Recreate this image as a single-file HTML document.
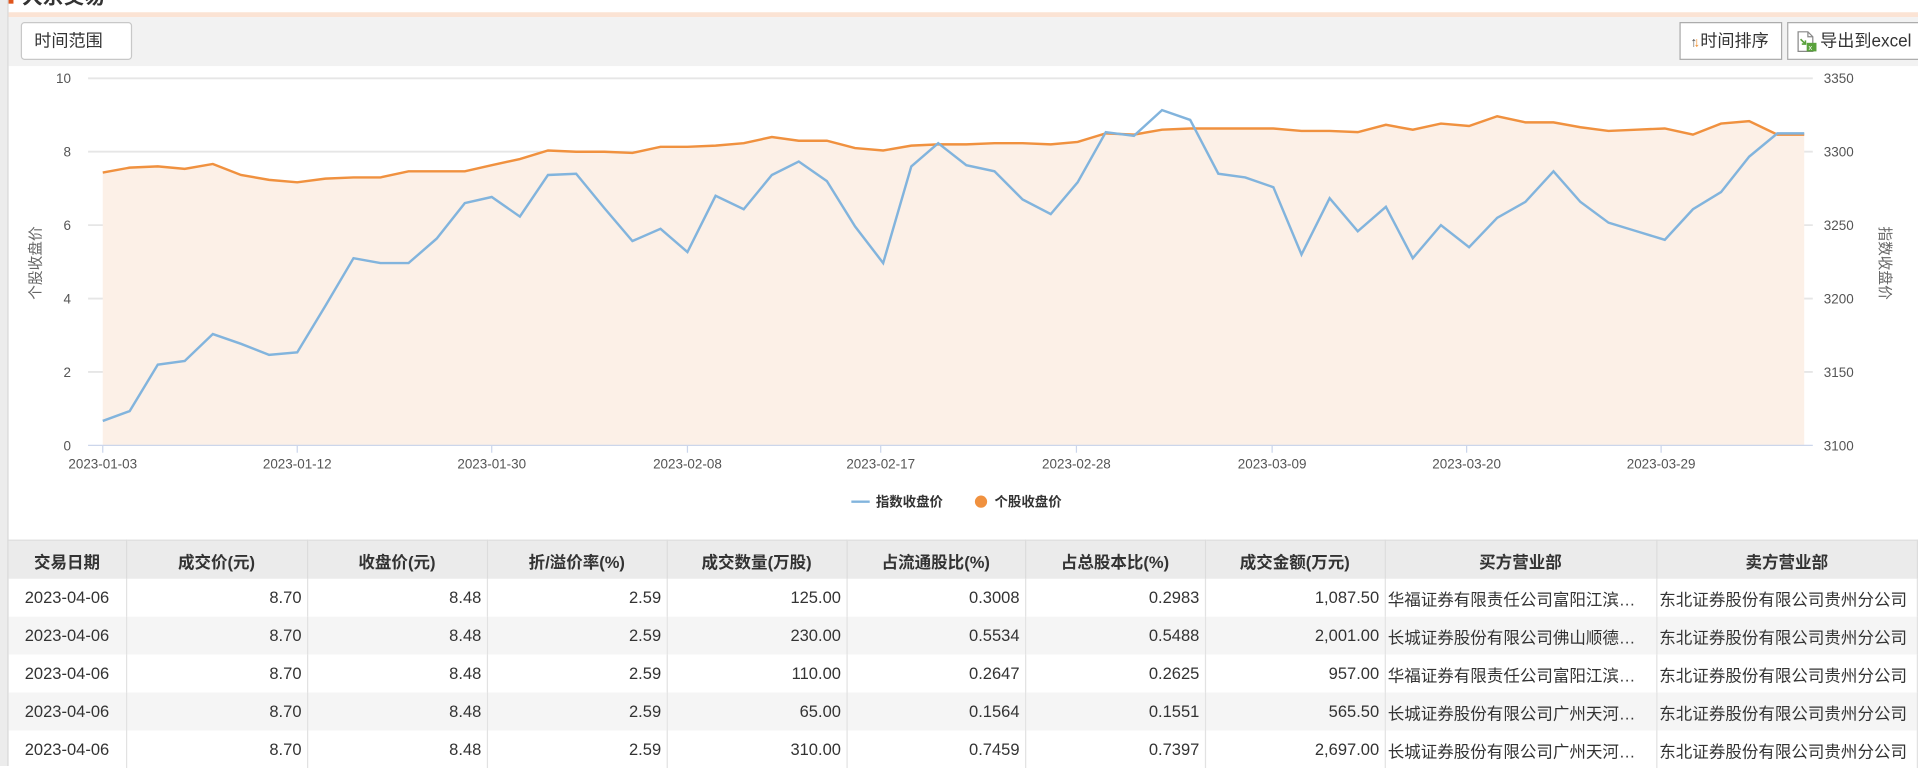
<!DOCTYPE html>
<html><head><meta charset="utf-8"><style>
html,body{margin:0;padding:0;width:1918px;height:766px;overflow:hidden;background:#fff}
#w{position:absolute;left:0;top:0;width:1568px;height:626px;transform:scale(1.22321,1.2236);transform-origin:0 0;font-family:"Liberation Sans","Noto Sans CJK SC",sans-serif;color:#333}
.strip{position:absolute;left:0;top:0;width:6px;height:626px;background:#ececec;border-right:1px solid #d8d8d8}
.mark{position:absolute;left:7px;top:0;width:4px;height:3px;background:#e0561d}
.title{position:absolute;left:18px;top:-17px;font-size:17px;font-weight:bold;color:#333}
.peach{position:absolute;left:7px;right:0;top:10px;height:4px;background:#fbe3d4}
.bar{position:absolute;left:7px;right:0;top:14px;height:40px;background:#f2f2f2}
.btn{position:absolute;top:18px;height:31px;background:#fff;border:1px solid #c8c8c8;box-sizing:border-box;font-size:14px;line-height:29px;color:#333}
table{position:absolute;left:7px;top:441px;border-collapse:collapse;width:1561px;font-size:13.5px}
th{background:#ebebeb;height:31px;font-weight:bold;border-right:1px solid #dcdcdc;border-top:1px solid #dcdcdc;padding:0}
td{height:31px;text-align:right;padding:0 4px;border-right:1px solid #e2e2e2;white-space:nowrap;overflow:hidden}
td:first-child{text-align:center}
td.l{text-align:left;padding-left:2px}
tr.g td{background:#f5f5f5}
</style></head><body><div id="w">
<div class="title">大宗交易</div>
<div class="strip"></div><div class="mark"></div><div class="peach"></div><div class="bar"></div>
<div class="btn" style="left:17px;width:91px;border-radius:3px;padding-left:10px">时间范围</div>
<div class="btn" style="left:1373px;width:84px;padding-left:8px;border-color:#aaa"><span style="font-size:11px;color:#555">↑</span><span style="font-size:11px;color:#f08a24;margin-left:-3px">↓</span>时间排序</div>
<div class="btn" style="left:1461px;width:110px;padding-left:26px;border-color:#aaa">
<svg style="position:absolute;left:6px;top:6px" width="18" height="18" viewBox="0 0 18 18"><path d="M2 1h8l4 4v12H2z" fill="#fff" stroke="#888"/><path d="M10 1v4h4" fill="none" stroke="#888"/><rect x="9" y="10" width="8" height="7" fill="#5aa23c"/><text x="10.5" y="16" font-size="6" fill="#fff" font-family="Liberation Sans">x</text><path d="M4 7l4 4M8 8v3H5" stroke="#5aa23c" fill="none" stroke-width="1.3"/></svg>导出到excel</div>
<svg style="position:absolute;left:0;top:54px" width="1568" height="387" viewBox="0 54 1568 387" font-family="Liberation Sans,Noto Sans CJK SC,sans-serif">
<g stroke="#e6e6e6" stroke-width="1.5"><line x1="72" y1="64" x2="1482" y2="64"/><line x1="72" y1="124" x2="1482" y2="124"/><line x1="72" y1="184" x2="1482" y2="184"/><line x1="72" y1="244" x2="1482" y2="244"/><line x1="72" y1="304" x2="1482" y2="304"/></g>
<polygon fill="#fcf0e7" points="84,364 84,141 106,137 129,136 151,138 174,134 197,143 220,147 243,149 266,146 289,145 311,145 334,140 357,140 380,140 402,135 425,130 448,123 471,124 494,124 517,125 540,120 562,120 585,119 608,117 631,112 653,115 676,115 699,121 722,123 745,119 767,118 790,118 813,117 836,117 859,118 881,116 904,109 927,110 950,106 973,105 996,105 1018,105 1041,105 1064,107 1087,107 1110,108 1133,102 1155,106 1178,101 1201,103 1224,95 1247,100 1270,100 1292,104 1315,107 1338,106 1361,105 1384,110 1407,101 1430,99 1453,110 1475,110 1475,364"/>
<line x1="72" y1="364" x2="1482" y2="364" stroke="#ccd6eb"/>
<g stroke="#ccd6eb"><line x1="84" y1="364" x2="84" y2="370"/><line x1="243" y1="364" x2="243" y2="370"/><line x1="402" y1="364" x2="402" y2="370"/><line x1="562" y1="364" x2="562" y2="370"/><line x1="720" y1="364" x2="720" y2="370"/><line x1="880" y1="364" x2="880" y2="370"/><line x1="1040" y1="364" x2="1040" y2="370"/><line x1="1199" y1="364" x2="1199" y2="370"/><line x1="1358" y1="364" x2="1358" y2="370"/></g>
<polyline fill="none" stroke="#f0913f" stroke-width="2" points="84,141 106,137 129,136 151,138 174,134 197,143 220,147 243,149 266,146 289,145 311,145 334,140 357,140 380,140 402,135 425,130 448,123 471,124 494,124 517,125 540,120 562,120 585,119 608,117 631,112 653,115 676,115 699,121 722,123 745,119 767,118 790,118 813,117 836,117 859,118 881,116 904,109 927,110 950,106 973,105 996,105 1018,105 1041,105 1064,107 1087,107 1110,108 1133,102 1155,106 1178,101 1201,103 1224,95 1247,100 1270,100 1292,104 1315,107 1338,106 1361,105 1384,110 1407,101 1430,99 1453,110 1475,110"/>
<polyline fill="none" stroke="#82b4dd" stroke-width="2" points="84,344 106,336 129,298 151,295 174,273 197,281 220,290 243,288 266,250 289,211 311,215 334,215 357,195 380,166 402,161 425,177 448,143 471,142 494,170 517,197 540,187 562,206 585,160 608,171 631,143 653,132 676,148 699,185 722,215 745,136 767,117 790,135 813,140 836,163 859,175 881,149 904,108 927,111 950,90 973,98 996,142 1018,145 1041,153 1064,208 1087,162 1110,189 1133,169 1155,211 1178,184 1201,202 1224,178 1247,165 1270,140 1292,165 1315,182 1338,189 1361,196 1384,171 1407,157 1430,128 1453,109 1475,109"/>
<g font-size="11" fill="#555" text-anchor="end"><text x="58" y="68">10</text><text x="58" y="128">8</text><text x="58" y="188">6</text><text x="58" y="248">4</text><text x="58" y="308">2</text><text x="58" y="368">0</text></g>
<g font-size="11" fill="#555"><text x="1491" y="68">3350</text><text x="1491" y="128">3300</text><text x="1491" y="188">3250</text><text x="1491" y="248">3200</text><text x="1491" y="308">3150</text><text x="1491" y="368">3100</text></g>
<g font-size="11" fill="#555" text-anchor="middle"><text x="84" y="383">2023-01-03</text><text x="243" y="383">2023-01-12</text><text x="402" y="383">2023-01-30</text><text x="562" y="383">2023-02-08</text><text x="720" y="383">2023-02-17</text><text x="880" y="383">2023-02-28</text><text x="1040" y="383">2023-03-09</text><text x="1199" y="383">2023-03-20</text><text x="1358" y="383">2023-03-29</text></g>
<text transform="translate(33,215) rotate(-90)" font-size="12" fill="#666" text-anchor="middle">个股收盘价</text>
<text transform="translate(1537,215) rotate(90)" font-size="12" fill="#666" text-anchor="middle">指数收盘价</text>
<line x1="696" y1="410" x2="711" y2="410" stroke="#82b4dd" stroke-width="2"/>
<text x="716" y="414" font-size="11" font-weight="bold" fill="#333">指数收盘价</text>
<circle cx="802" cy="410" r="5" fill="#f0913f"/>
<text x="813" y="414" font-size="11" font-weight="bold" fill="#333">个股收盘价</text>
</svg>
<table>
<colgroup><col style="width:96px"><col style="width:148px"><col style="width:147px"><col style="width:147px"><col style="width:147px"><col style="width:146px"><col style="width:147px"><col style="width:147px"><col style="width:222px"><col></colgroup>
<tr><th>交易日期</th><th>成交价(元)</th><th>收盘价(元)</th><th>折/溢价率(%)</th><th>成交数量(万股)</th><th>占流通股比(%)</th><th>占总股本比(%)</th><th>成交金额(万元)</th><th>买方营业部</th><th>卖方营业部</th></tr>
<tr><td>2023-04-06</td><td>8.70</td><td>8.48</td><td>2.59</td><td>125.00</td><td>0.3008</td><td>0.2983</td><td>1,087.50</td><td class="l">华福证券有限责任公司富阳江滨…</td><td class="l">东北证券股份有限公司贵州分公司</td></tr>
<tr class="g"><td>2023-04-06</td><td>8.70</td><td>8.48</td><td>2.59</td><td>230.00</td><td>0.5534</td><td>0.5488</td><td>2,001.00</td><td class="l">长城证券股份有限公司佛山顺德…</td><td class="l">东北证券股份有限公司贵州分公司</td></tr>
<tr><td>2023-04-06</td><td>8.70</td><td>8.48</td><td>2.59</td><td>110.00</td><td>0.2647</td><td>0.2625</td><td>957.00</td><td class="l">华福证券有限责任公司富阳江滨…</td><td class="l">东北证券股份有限公司贵州分公司</td></tr>
<tr class="g"><td>2023-04-06</td><td>8.70</td><td>8.48</td><td>2.59</td><td>65.00</td><td>0.1564</td><td>0.1551</td><td>565.50</td><td class="l">长城证券股份有限公司广州天河…</td><td class="l">东北证券股份有限公司贵州分公司</td></tr>
<tr><td>2023-04-06</td><td>8.70</td><td>8.48</td><td>2.59</td><td>310.00</td><td>0.7459</td><td>0.7397</td><td>2,697.00</td><td class="l">长城证券股份有限公司广州天河…</td><td class="l">东北证券股份有限公司贵州分公司</td></tr>
</table>
</div></body></html>
